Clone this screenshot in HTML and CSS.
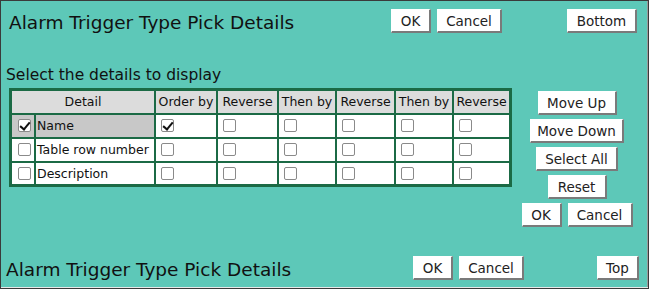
FILE: index.html
```html
<!DOCTYPE html>
<html>
<head>
<meta charset="utf-8">
<link rel="stylesheet" href="styles.css">
</head>
<body>
<div class="page">
  <div class="bar top">
    <div class="title t1">Alarm Trigger Type Pick Details</div>
    <button class="btn w-ok gap6">OK</button>
    <button class="btn w-cancel gap-top">Cancel</button>
    <button class="btn w-bottom">Bottom</button>
  </div>
  <div class="subtitle">Select the details to display</div>
  <div class="main">
    <table class="grid">
      <tr class="head">
        <td colspan="2" class="c-detail">Detail</td>
        <td class="c-ob">Order by</td>
        <td class="c-r1">Reverse</td>
        <td class="c-tb1">Then by</td>
        <td class="c-r2">Reverse</td>
        <td class="c-tb2">Then by</td>
        <td class="c-r3">Reverse</td>
      </tr>
      <tr>
        <td class="c-chk sel"><span class="cb on"></span></td>
        <td class="c-name sel">Name</td>
        <td><span class="cb on"></span></td>
        <td><span class="cb"></span></td>
        <td><span class="cb"></span></td>
        <td><span class="cb"></span></td>
        <td><span class="cb"></span></td>
        <td><span class="cb"></span></td>
      </tr>
      <tr>
        <td class="c-chk"><span class="cb"></span></td>
        <td class="c-name">Table row number</td>
        <td><span class="cb"></span></td>
        <td><span class="cb"></span></td>
        <td><span class="cb"></span></td>
        <td><span class="cb"></span></td>
        <td><span class="cb"></span></td>
        <td><span class="cb"></span></td>
      </tr>
      <tr>
        <td class="c-chk"><span class="cb"></span></td>
        <td class="c-name">Description</td>
        <td><span class="cb"></span></td>
        <td><span class="cb"></span></td>
        <td><span class="cb"></span></td>
        <td><span class="cb"></span></td>
        <td><span class="cb"></span></td>
        <td><span class="cb"></span></td>
      </tr>
    </table>
    <div class="side">
      <button class="btn w-up">Move Up</button>
      <button class="btn w-down">Move Down</button>
      <button class="btn w-all">Select All</button>
      <button class="btn w-reset">Reset</button>
      <div class="pair">
        <button class="btn w-ok">OK</button>
        <button class="btn w-cancel">Cancel</button>
      </div>
    </div>
  </div>
  <div class="bar bottom">
    <div class="title t2">Alarm Trigger Type Pick Details</div>
    <button class="btn w-ok gap6">OK</button>
    <button class="btn w-cancel gap-bot">Cancel</button>
    <button class="btn w-top">Top</button>
  </div>
</div>
</body>
</html>
```

FILE: styles.css
```css
html, body {
  margin: 0;
  padding: 0;
}
.page {
  width: 649px;
  height: 289px;
  box-sizing: border-box;
  border: 1px solid #3a3a3a;
  box-shadow: inset 0 -1px 0 #e8e8e8, inset -1px 0 0 #9a9a9a;
  background: #5dc8b8;
  font-family: "DejaVu Sans", sans-serif;
  color: #111;
  display: flex;
  flex-direction: column;
}
.bar {
  display: flex;
  align-items: center;
  height: 24px;
}
.top {
  margin-top: 8px;
  padding-left: 8px;
}
.title {
  font-size: 18.5px;
  white-space: nowrap;
  padding-top: 2px;
}
.t1 { width: 382px; }
.t2 { width: 407px; }
.btn {
  font-family: "DejaVu Sans", sans-serif;
  font-size: 13.5px;
  color: #222;
  height: 24px;
  padding: 0;
  background: #fff;
  border: 1px solid #fff;
  border-right: 2px solid #7a7a7a;
  border-bottom: 2px solid #7a7a7a;
  box-sizing: border-box;
  text-align: center;
}
.w-ok { width: 40px; }
.w-cancel { width: 65px; }
.gap6 { margin-right: 6px; }
.gap-top { margin-right: 65px; }
.gap-bot { margin-right: 73px; }
.w-bottom { width: 70px; }
.w-top { width: 42px; }
.subtitle {
  font-size: 15.5px;
  margin-top: 33px;
  padding-left: 5px;
  line-height: 18px;
}
.main {
  display: flex;
  align-items: flex-start;
  margin-top: 4px;
  padding-left: 8px;
}
.grid {
  border-collapse: collapse;
  border: 3px solid #1b6a45;
  font-size: 12.5px;
  background: #fff;
}
.grid tr {
  height: 24px;
}
.grid td {
  border: 2px solid #1b6a45;
  padding: 0 2px;
  white-space: nowrap;
  vertical-align: middle;
}
.grid .head td {
  background: #dcdcdc;
  text-align: center;
}
.grid td.sel {
  background: #c8c8c8;
}
.c-chk { width: 17px; }
.c-name { width: 115px; }
.c-ob { width: 56px; }
.c-r1 { width: 55px; }
.c-tb1 { width: 52px; }
.c-r2 { width: 53px; }
.c-tb2 { width: 52px; }
.c-r3 { width: 51px; }
.grid td.c-chk { padding-left: 3px; }
.grid td.c-name { padding-left: 1px; }
.cb {
  display: block;
  width: 11px;
  height: 11px;
  border: 1px solid #8a8a8a;
  border-radius: 2px;
  background: #fff;
  margin-left: 3px;
  position: relative;
}
.cb.on::after {
  content: "";
  position: absolute;
  left: 3px;
  top: 0px;
  width: 4px;
  height: 8px;
  border-right: 2px solid #111;
  border-bottom: 2px solid #111;
  transform: rotate(40deg);
}
.side {
  width: 130px;
  display: flex;
  flex-direction: column;
  align-items: center;
  gap: 4px;
  padding-top: 3px;
}
.pair {
  display: flex;
  gap: 6px;
}
.w-up { width: 79px; }
.w-down { width: 94px; }
.w-all { width: 82px; }
.w-reset { width: 59px; }
.bottom {
  margin-top: auto;
  margin-bottom: 8px;
  padding-left: 5px;
}
```
